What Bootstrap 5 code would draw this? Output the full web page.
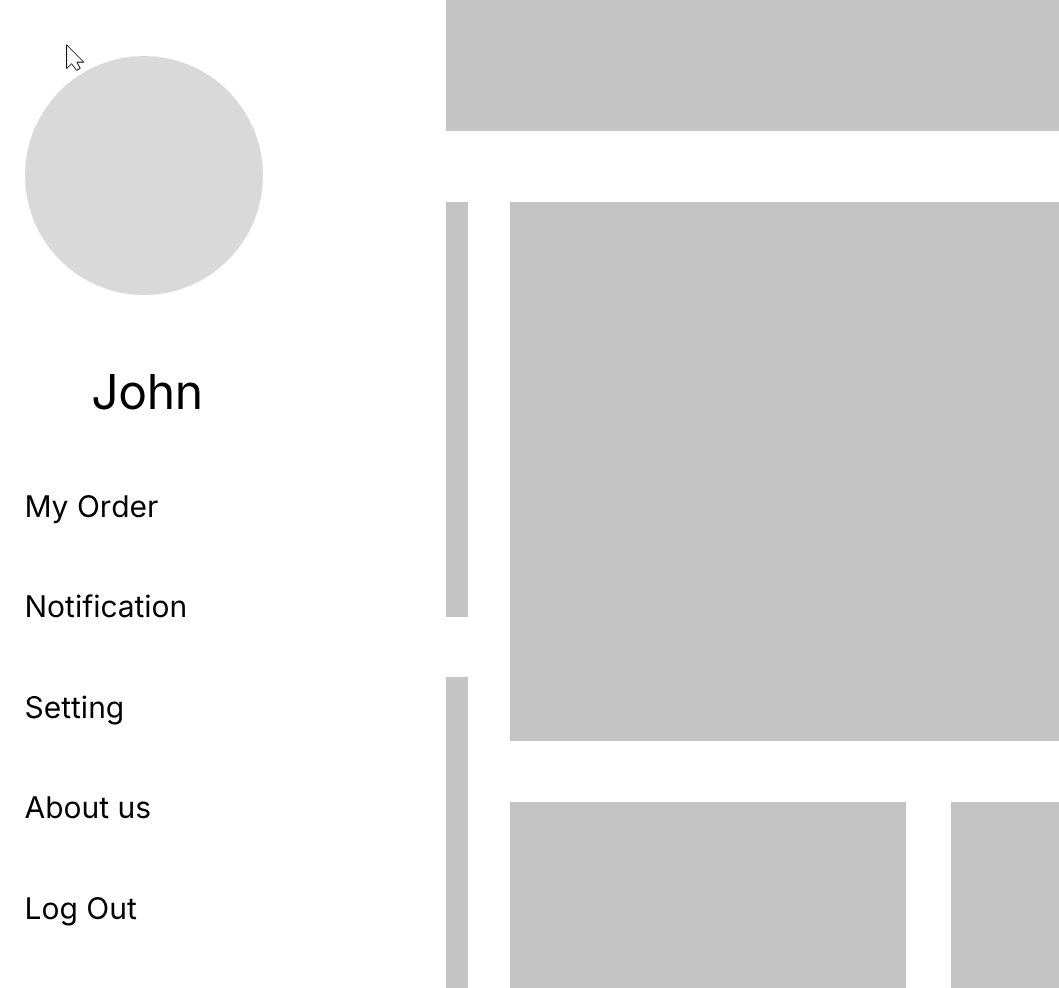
<!DOCTYPE html>
<html lang="en">
<head>
<meta charset="utf-8">
<title>Profile</title>
<link href="https://cdn.jsdelivr.net/npm/bootstrap@5.3.0/dist/css/bootstrap.min.css" rel="stylesheet">
<style>
html, body { height: 988px; overflow: hidden; background: #fff; }
body { font-family: Inter, "Liberation Sans", sans-serif; color: #000; font-optical-sizing: none; text-rendering: geometricPrecision; font-kerning: none; }
.shell { width: 1059px; height: 988px; overflow: hidden; }
.side { width: 446px; flex: none; padding: 56px 0 0 24.5px; will-change: transform; }
.avatar { width: 238.5px; height: 239px; border-radius: 50%; background: #d9d9d9; }
.uname { width: 245px; margin: 68px 0 0; font-size: 48px; font-weight: 400; line-height: 58px; text-align: center; letter-spacing: -0.3px; }
.menu-list { margin-top: 57px; gap: 42.4px; }
.menu-list a { font-size: 30px; line-height: 58px; height: 58px; color: #000; text-decoration: none; display: block; }
.menu-list li { height: 58px; }
.main-area { width: 613px; flex: none; }
.blk { background: #c4c4c4; }
.top-band { height: 131px; margin-bottom: 71px; }
.rail { width: 22px; flex: none; margin-right: 42px; gap: 60px; }
.rail-a { height: 415px; }
.rail-b { height: 400px; }
.content { width: 549px; flex: none; }
.hero { height: 539.4px; margin-bottom: 60.6px; }
.thumbs { gap: 45px; }
.thumb-a { width: 396px; height: 300px; flex: none; }
.thumb-b { width: 108px; height: 300px; flex: none; }
.cursor { position: absolute; left: 66px; top: 44px; width: 19px; height: 27px; }
</style>
</head>
<body class="m-0 position-relative">
<div class="shell d-flex">
  <aside class="side">
    <div class="avatar"></div>
    <h1 class="uname">John</h1>
    <ul class="menu-list list-unstyled d-flex flex-column">
      <li><a href="#">My Order</a></li>
      <li><a href="#">Notification</a></li>
      <li><a href="#">Setting</a></li>
      <li><a href="#">About us</a></li>
      <li><a href="#">Log Out</a></li>
    </ul>
  </aside>
  <main class="main-area">
    <div class="blk top-band"></div>
    <div class="d-flex">
      <div class="rail d-flex flex-column">
        <div class="blk rail-a"></div>
        <div class="blk rail-b"></div>
      </div>
      <div class="content">
        <div class="blk hero"></div>
        <div class="thumbs d-flex">
          <div class="blk thumb-a"></div>
          <div class="blk thumb-b"></div>
        </div>
      </div>
    </div>
  </main>
</div>
<svg class="cursor" viewBox="0 0 19 27" aria-hidden="true"><path d="M0.6 0.8 L0.6 24.6 L5.6 19.8 L10.6 26.4 L14.2 24.4 L11 18.2 L17.8 18.2 Z" fill="#fff" stroke="#000" stroke-width="1"/></svg>
</body>
</html>
